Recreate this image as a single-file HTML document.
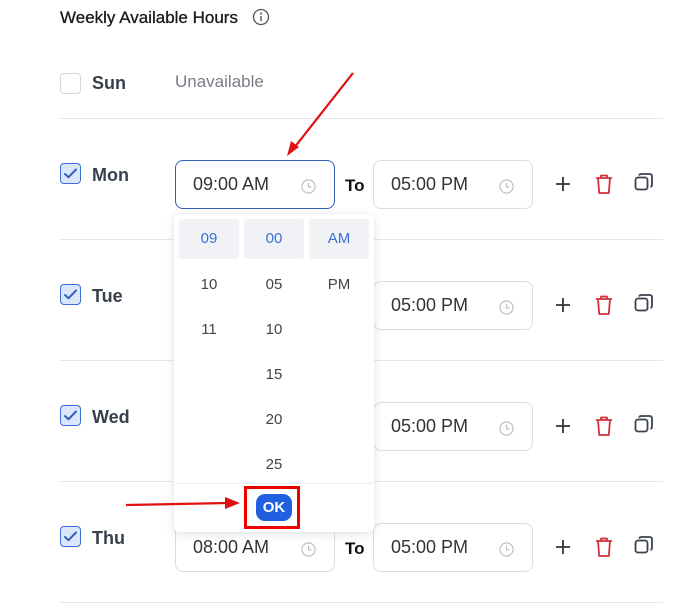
<!DOCTYPE html><html><head><style>
body{margin:0;width:691px;height:603px;background:#fff;font-family:"Liberation Sans",sans-serif;position:relative;overflow:hidden}
.a{position:absolute}
.sep{position:absolute;left:60px;width:603px;height:1px;background:#e8e8ec}
.cb{position:absolute;left:60px;width:21px;height:21px;border:1px solid #d5d7dd;border-radius:4px;box-sizing:border-box;background:#fff}
.cb.on{background:#dbe6fb;border-color:#3d6cd9}
.day{position:absolute;left:92px;font-size:18px;font-weight:bold;color:#39404d}
.inp{position:absolute;width:160px;height:49px;border:1px solid #dcdde2;border-radius:8px;box-sizing:border-box;font-size:18px;color:#333;padding-left:17px;line-height:47px}
.inp.f{border-color:#2f5fb8}
.clk{position:absolute;right:18px;top:18px;width:15px;height:15px}
.to{position:absolute;left:345px;font-size:17px;font-weight:bold;color:#111}
.dd{position:absolute;left:174px;top:214px;width:200px;height:318px;background:#fff;border-radius:5px;box-shadow:0 2px 10px rgba(0,0,0,.12)}
.it{position:absolute;width:60px;height:40px;line-height:40px;text-align:center;font-size:15px;color:#444}
.sel{background:#f0f2f6;border-radius:3px;color:#3a6fd6}
</style></head><body>
<div class="a" style="left:60px;top:8px;font-size:17px;color:#1a1a1a;-webkit-text-stroke:0.3px #1a1a1a">Weekly Available Hours</div>
<svg class="a" style="left:252px;top:8px" width="18" height="18" viewBox="0 0 18 18"><circle cx="9" cy="9" r="7.5" fill="none" stroke="#555" stroke-width="1.3"/><circle cx="9" cy="5.5" r="1" fill="#555"/><path d="M9 8v5" stroke="#555" stroke-width="1.4"/></svg>

<div class="cb" style="top:73px"></div><div class="day" style="top:73px">Sun</div>
<div class="a" style="left:175px;top:72px;font-size:17px;color:#777c86">Unavailable</div>

<div class="sep" style="top:118px"></div>
<div class="sep" style="top:239px"></div>
<div class="sep" style="top:360px"></div>
<div class="sep" style="top:481px"></div>
<div class="sep" style="top:602px"></div>

<div id="rows"></div>
<script>
var days=["Mon","Tue","Wed","Thu"],starts=["09:00 AM","09:00 AM","09:00 AM","08:00 AM"],h="";
var clk='<svg class="clk" viewBox="0 0 16 16"><circle cx="8" cy="8" r="7" fill="none" stroke="#bbb" stroke-width="1.2"/><path d="M8 4v4.5h3" fill="none" stroke="#bbb" stroke-width="1.2"/></svg>';
for(var i=0;i<4;i++){var t=160+121*i;
h+='<div class="cb on" style="top:'+(t+3)+'px"><svg width="19" height="19" viewBox="0 0 19 19"><path d="M4 10l3.5 3.2L15 5.5" fill="none" stroke="#2f5fb8" stroke-width="2" stroke-linecap="round" stroke-linejoin="round"/></svg></div>';
h+='<div class="day" style="top:'+(t+5)+'px">'+days[i]+'</div>';
h+='<div class="inp'+(i==0?' f':'')+'" style="left:175px;top:'+t+'px">'+starts[i]+clk+'</div>';
h+='<div class="to" style="top:'+(t+16)+'px">To</div>';
h+='<div class="inp" style="left:373px;top:'+t+'px">05:00 PM'+clk+'</div>';
h+='<svg class="a" style="left:555px;top:'+(t+16)+'px" width="16" height="16"><path d="M8 1v14M1 8h14" stroke="#333" stroke-width="1.8"/></svg>';
h+='<svg class="a" style="left:595px;top:'+(t+14)+'px" width="18" height="21" viewBox="0 0 18 21"><path d="M1 4h16M6 4V1.5h6V4M3 4l1.2 15h9.6L15 4" fill="none" stroke="#d0313a" stroke-width="1.8" stroke-linejoin="round"/></svg>';
h+='<svg class="a" style="left:634px;top:'+(t+13)+'px" width="20" height="20" viewBox="0 0 20 20"><rect x="1.5" y="4.5" width="12" height="12" rx="2.5" fill="none" stroke="#3a414d" stroke-width="1.8"/><path d="M5 2.5Q5.5 1 7.5 1h8Q18 1 18 3.5v8q0 2-1.5 2.5" fill="none" stroke="#3a414d" stroke-width="1.8"/></svg>';
}
document.getElementById("rows").innerHTML=h;
</script>

<div class="dd">
<div class="it sel" style="left:5px;top:5px">09</div>
<div class="it sel" style="left:70px;top:5px">00</div>
<div class="it sel" style="left:135px;top:5px">AM</div>
<div class="it" style="left:5px;top:51px">10</div>
<div class="it" style="left:70px;top:51px">05</div>
<div class="it" style="left:135px;top:51px">PM</div>
<div class="it" style="left:5px;top:96px">11</div>
<div class="it" style="left:70px;top:96px">10</div>
<div class="it" style="left:70px;top:141px">15</div>
<div class="it" style="left:70px;top:186px">20</div>
<div class="it" style="left:70px;top:231px">25</div>
<div class="a" style="left:0;top:269px;width:200px;height:1px;background:#eceef2"></div>
<div class="a" style="left:82px;top:280px;width:36px;height:27px;background:#1f5fe0;border-radius:9px;color:#fff;font-weight:bold;font-size:15px;text-align:center;line-height:27px">OK</div>
<div class="a" style="left:70px;top:272px;width:56px;height:43px;border:3px solid #e00;box-sizing:border-box"></div>
</div>

<svg class="a" style="left:0;top:0" width="691" height="603">
<path d="M353 73L294 148" stroke="#e01010" stroke-width="2.2"/><path d="M287 156l4-15 8 6z" fill="#e01010"/>
<path d="M126 505L228 503" stroke="#e01010" stroke-width="2.2"/><path d="M240 503l-15-6v12z" fill="#e01010"/>
</svg>
</body></html>
